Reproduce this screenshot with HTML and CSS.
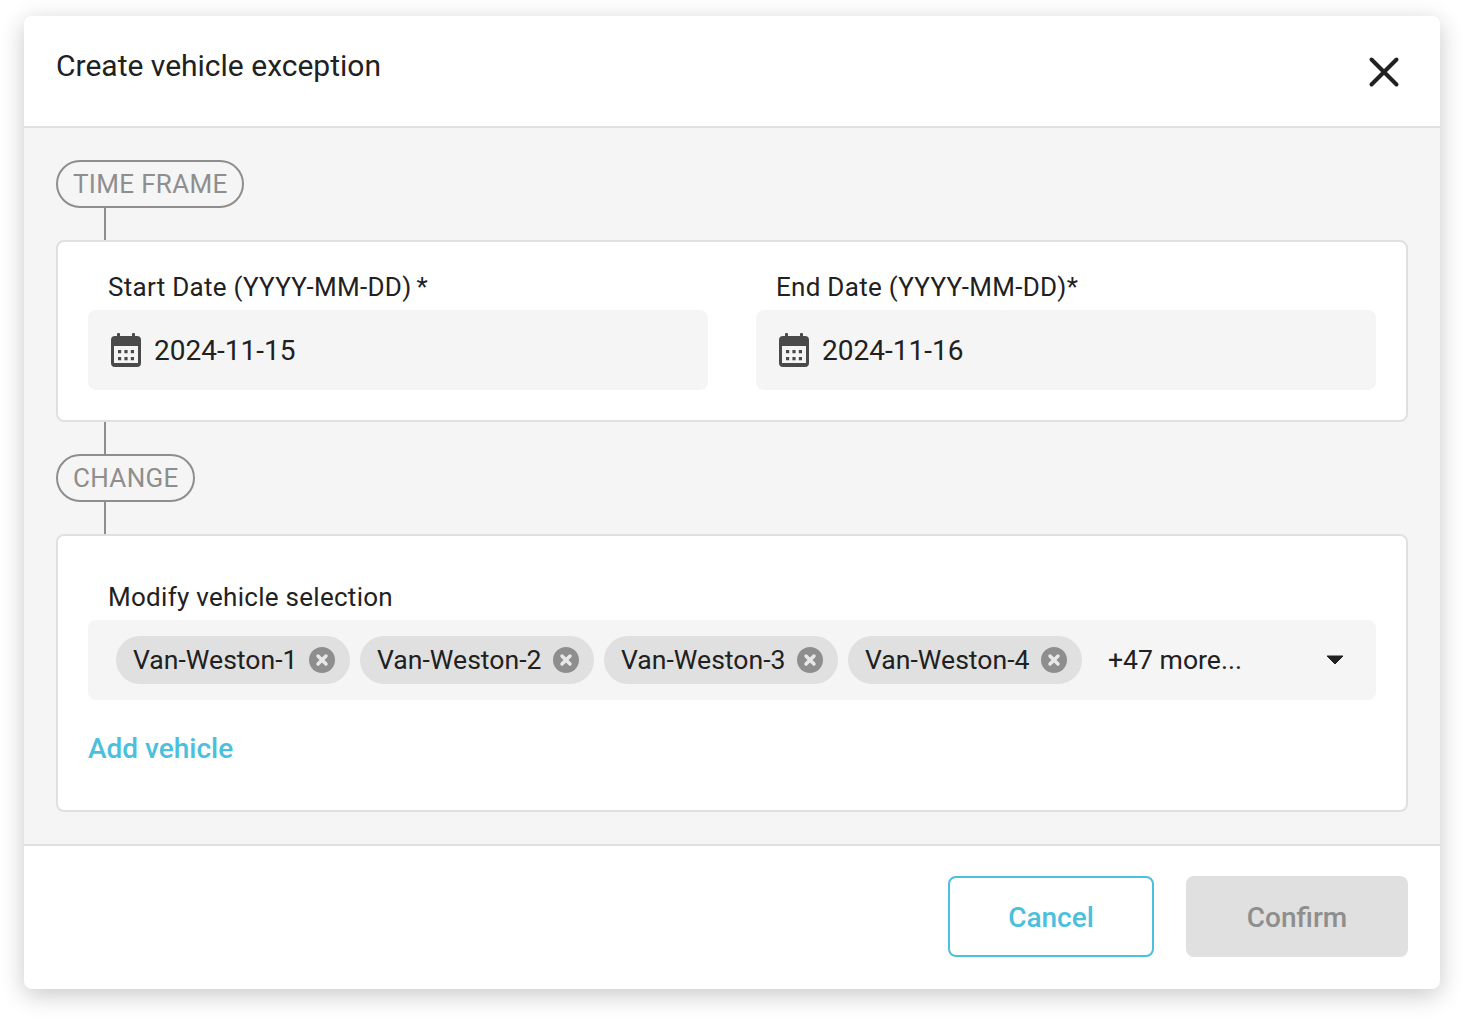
FILE: index.html
```html
<!DOCTYPE html>
<html lang="en">
<head>
<meta charset="utf-8">
<title>Create vehicle exception</title>
<link rel="stylesheet" href="styles.css">
</head>
<body>
<div class="modal">
  <header class="modal-header">
    <h1 class="title">Create vehicle exception</h1>
    <svg class="close" viewBox="0 0 32 32" aria-label="Close"><path d="M3.500 3.500L28.500 28.500M28.500 3.500L3.500 28.500"/></svg>
  </header>
  <main class="modal-body">
    <div class="pill">TIME FRAME</div>
    <div class="connector"></div>
    <section class="card card-dates">
      <div class="field">
        <label class="label">Start Date (YYYY-MM-DD)<span class="req">*</span></label>
        <div class="input">
          <svg class="cal" viewBox="0 0 30 34"><path class="cal-body" fill-rule="evenodd" d="M6 1a1 1 0 0 1 1-1h1a1 1 0 0 1 1 1v2h12V1a1 1 0 0 1 1-1h1a1 1 0 0 1 1 1v2h2a4 4 0 0 1 4 4v23a4 4 0 0 1-4 4H4a4 4 0 0 1-4-4V7a4 4 0 0 1 4-4h2zM3 13v17h24V13z"/><path class="cal-body" d="M7 17h3.200v3.200H7zM13.400 17h3.200v3.200h-3.200zM19.800 17h3.200v3.200h-3.200zM7 24h3.200v3.200H7zM13.400 24h3.200v3.200h-3.200zM19.800 24h3.200v3.200h-3.200z"/></svg>
          <span>2024-11-15</span>
        </div>
      </div>
      <div class="field">
        <label class="label">End Date (YYYY-MM-DD)*</label>
        <div class="input">
          <svg class="cal" viewBox="0 0 30 34"><path class="cal-body" fill-rule="evenodd" d="M6 1a1 1 0 0 1 1-1h1a1 1 0 0 1 1 1v2h12V1a1 1 0 0 1 1-1h1a1 1 0 0 1 1 1v2h2a4 4 0 0 1 4 4v23a4 4 0 0 1-4 4H4a4 4 0 0 1-4-4V7a4 4 0 0 1 4-4h2zM3 13v17h24V13z"/><path class="cal-body" d="M7 17h3.200v3.200H7zM13.400 17h3.200v3.200h-3.200zM19.800 17h3.200v3.200h-3.200zM7 24h3.200v3.200H7zM13.400 24h3.200v3.200h-3.200zM19.800 24h3.200v3.200h-3.200z"/></svg>
          <span>2024-11-16</span>
        </div>
      </div>
    </section>
    <div class="connector"></div>
    <div class="pill">CHANGE</div>
    <div class="connector"></div>
    <section class="card card-change">
      <label class="label">Modify vehicle selection</label>
      <div class="select">
        <span class="chip"><span class="chip-text">Van-Weston-1</span><svg class="chip-x" viewBox="0 0 26 26"><circle cx="13" cy="13" r="13"/><path d="M9 9L17 17M17 9L9 17"/></svg></span>
        <span class="chip"><span class="chip-text">Van-Weston-2</span><svg class="chip-x" viewBox="0 0 26 26"><circle cx="13" cy="13" r="13"/><path d="M9 9L17 17M17 9L9 17"/></svg></span>
        <span class="chip"><span class="chip-text">Van-Weston-3</span><svg class="chip-x" viewBox="0 0 26 26"><circle cx="13" cy="13" r="13"/><path d="M9 9L17 17M17 9L9 17"/></svg></span>
        <span class="chip"><span class="chip-text">Van-Weston-4</span><svg class="chip-x" viewBox="0 0 26 26"><circle cx="13" cy="13" r="13"/><path d="M9 9L17 17M17 9L9 17"/></svg></span>
        <span class="more">+47 more...</span>
        <svg class="caret" viewBox="0 0 18 10"><path d="M1 1H17L9 9Z"/></svg>
      </div>
      <a class="add-link">Add vehicle</a>
    </section>
  </main>
  <footer class="modal-footer">
    <button class="btn btn-cancel">Cancel</button>
    <button class="btn btn-confirm">Confirm</button>
  </footer>
</div>
</body>
</html>
```
FILE: styles.css
```css
* { box-sizing: border-box; }
html, body { margin: 0; height: 100%; background: #fff; }
body {
  padding: 16px 24px 32px;
  font-family: Roboto, "Liberation Sans", sans-serif;
  color: #212121;
}
.modal {
  width: 1416px;
  height: 973px;
  border-radius: 8px;
  background: #fff;
  box-shadow: 0 6px 24px rgba(0, 0, 0, 0.22);
  display: flex;
  flex-direction: column;
  overflow: hidden;
}
.modal-header {
  height: 112px;
  flex: none;
  border-bottom: 2px solid #e0e0e0;
  padding: 32px 40px 0 32px;
  display: flex;
  justify-content: space-between;
  align-items: flex-start;
}
.title {
  margin: 0;
  font-size: 30px;
  line-height: 36px;
  font-weight: 400;
}
.close { width: 32px; height: 32px; margin-top: 8px; }
.close path { stroke: #212121; stroke-width: 4; fill: none; stroke-linecap: round; }
.modal-body {
  flex: 1;
  background: #f5f5f5;
  padding: 32px;
  display: flex;
  flex-direction: column;
  align-items: flex-start;
}
.pill {
  height: 48px;
  border: 2px solid #8e8e8e;
  border-radius: 24px;
  padding: 0 14.5px 0 15px;
  font-size: 26px;
  line-height: 44px;
  color: #8e8e8e;
  letter-spacing: 0.33px;
}
.connector { width: 2px; height: 32px; margin-left: 48px; background: #8e8e8e; }
.card {
  width: 1352px;
  background: #fff;
  border: 2px solid #e0e0e0;
  border-radius: 8px;
  padding: 0 30px;
}
.card-dates {
  height: 182px;
  display: flex;
  gap: 48px;
  padding-top: 30px;
}
.card-change { height: 278px; padding-top: 46px; }
.field { flex: 1; }
.label {
  display: block;
  padding-left: 20px;
  font-size: 26px;
  line-height: 30px;
  height: 38px;
  letter-spacing: 0.28px;
}
.req { margin-left: 5px; }
.input {
  height: 80px;
  background: #f5f5f5;
  border-radius: 8px;
  padding-left: 23px;
  display: flex;
  align-items: center;
  gap: 13px;
  font-size: 28px;
}
.cal { width: 30px; height: 34px; flex: none; }
.cal-body { fill: #4a4a4a; }
.select {
  height: 80px;
  background: #f5f5f5;
  border-radius: 8px;
  padding: 0 32px 0 28px;
  display: flex;
  align-items: center;
  gap: 10px;
  font-size: 26.6px;
}
.chip {
  width: 234px;
  height: 48px;
  flex: none;
  border-radius: 24px;
  background: #e0e0e0;
  padding-left: 17px;
  display: flex;
  align-items: center;
  justify-content: space-between;
  padding-right: 15px;
}
.chip-text { margin-bottom: 2px; }
.chip-x { width: 26px; height: 26px; flex: none; }
.chip-x circle { fill: #8e8e8e; }
.chip-x path { stroke: #e8e8e8; stroke-width: 3.500; stroke-linecap: round; fill: none; }
.more { margin: 0 0 2px 16px; flex: 1; }
.caret { width: 18px; height: 10px; flex: none; }
.caret path { fill: #212121; stroke: #212121; stroke-width: 1; stroke-linejoin: round; }
.add-link {
  display: block;
  margin-top: 32px;
  font-size: 28px;
  line-height: 34px;
  font-weight: 500;
  color: #4bbfdb;
}
.modal-footer {
  height: 145px;
  flex: none;
  border-top: 2px solid #e0e0e0;
  padding: 30px 32px 0;
  display: flex;
  justify-content: flex-end;
  gap: 32px;
}
.btn {
  height: 81px;
  padding-top: 2px;
  border-radius: 8px;
  font-family: inherit;
  font-size: 28px;
  font-weight: 500;
}
.btn-cancel { width: 206px; background: #fff; border: 2px solid #4bbfdb; color: #4bbfdb; }
.btn-confirm { width: 222px; background: #e0e0e0; border: 0; color: #8e8e8e; }
```
